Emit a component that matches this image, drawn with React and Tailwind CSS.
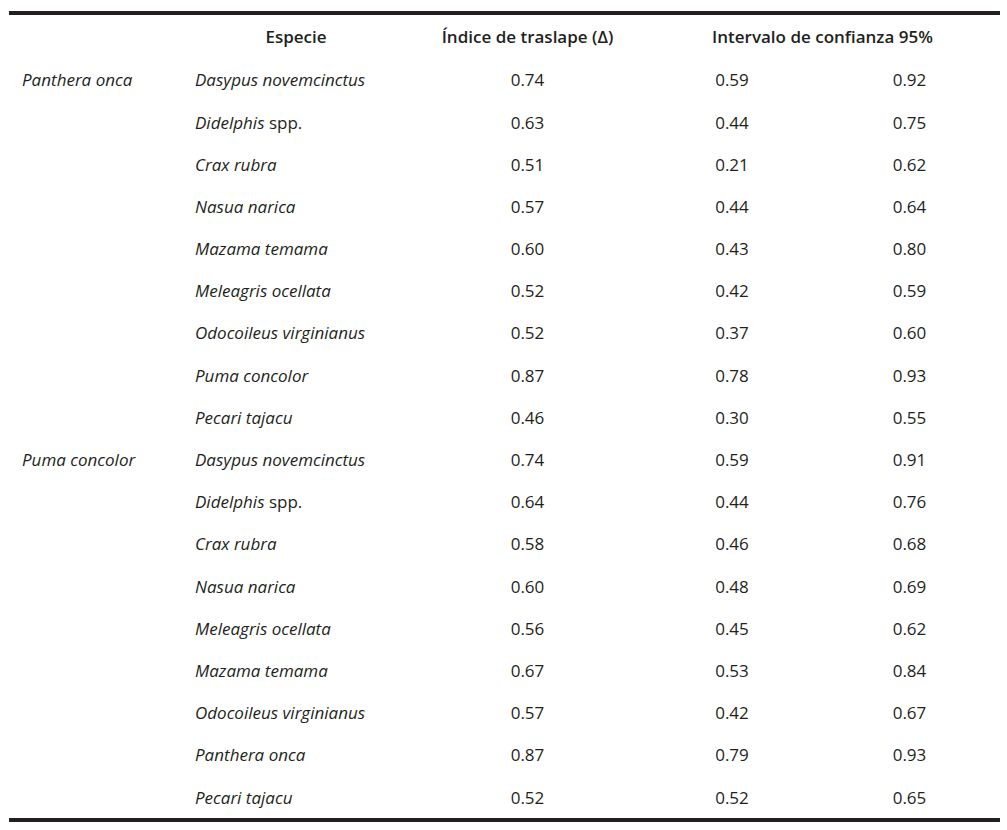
const rows = [
  ["Panthera onca", "Dasypus novemcinctus", "", "0.74", "0.59", "0.92"],
  ["", "Didelphis", " spp.", "0.63", "0.44", "0.75"],
  ["", "Crax rubra", "", "0.51", "0.21", "0.62"],
  ["", "Nasua narica", "", "0.57", "0.44", "0.64"],
  ["", "Mazama temama", "", "0.60", "0.43", "0.80"],
  ["", "Meleagris ocellata", "", "0.52", "0.42", "0.59"],
  ["", "Odocoileus virginianus", "", "0.52", "0.37", "0.60"],
  ["", "Puma concolor", "", "0.87", "0.78", "0.93"],
  ["", "Pecari tajacu", "", "0.46", "0.30", "0.55"],
  ["Puma concolor", "Dasypus novemcinctus", "", "0.74", "0.59", "0.91"],
  ["", "Didelphis", " spp.", "0.64", "0.44", "0.76"],
  ["", "Crax rubra", "", "0.58", "0.46", "0.68"],
  ["", "Nasua narica", "", "0.60", "0.48", "0.69"],
  ["", "Meleagris ocellata", "", "0.56", "0.45", "0.62"],
  ["", "Mazama temama", "", "0.67", "0.53", "0.84"],
  ["", "Odocoileus virginianus", "", "0.57", "0.42", "0.67"],
  ["", "Panthera onca", "", "0.87", "0.79", "0.93"],
  ["", "Pecari tajacu", "", "0.52", "0.52", "0.65"],
];

export default function App() {
  return (
    <div className="min-h-[830px] w-[1007px] bg-white pt-[11px] font-['Open_Sans',sans-serif] text-[17px] text-[#231f20]">
      <div className="ml-[9px] w-[991px] border-y-4 border-[#231f20]">
        <div className="flex h-[44px] items-center font-semibold">
          <div className="w-[173px]" />
          <div className="w-[228px] text-center">Especie</div>
          <div className="w-[235px] text-center">Índice de traslape (Δ)</div>
          <div className="w-[355px] text-center">Intervalo de confianza 95%</div>
        </div>
        {rows.map((r, i) => (
          <div key={i} className="flex h-[42.2px] items-center">
            <div className="w-[173px] pl-[13px] italic">{r[0]}</div>
            <div className="w-[228px] pl-[13px]">
              <span className="italic">{r[1]}</span>
              {r[2]}
            </div>
            <div className="w-[235px] text-center">{r[3]}</div>
            <div className="w-[174px] text-center">{r[4]}</div>
            <div className="w-[181px] text-center">{r[5]}</div>
          </div>
        ))}
      </div>
    </div>
  );
}
